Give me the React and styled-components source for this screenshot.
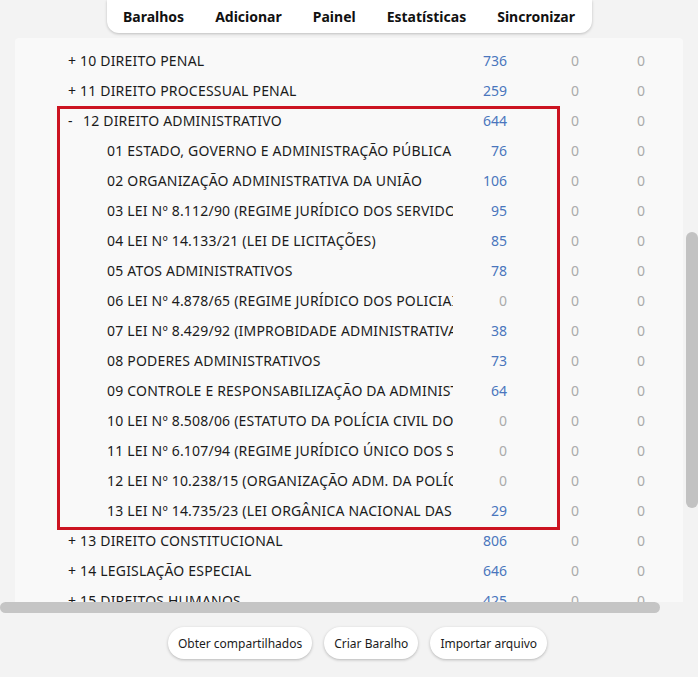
import React from 'react';
import styled, { createGlobalStyle } from 'styled-components';

// -- CONSTANTS
const navItems = ['Baralhos', 'Adicionar', 'Painel', 'Estatísticas', 'Sincronizar'];

const topDecks = [
  { name: '10 DIREITO PENAL', count: 736 },
  { name: '11 DIREITO PROCESSUAL PENAL', count: 259 },
];

const openDeck = { name: '12 DIREITO ADMINISTRATIVO', count: 644 };

// names are cut where the deck column ends
const subDecks = [
  { name: '01 ESTADO, GOVERNO E ADMINISTRAÇÃO PÚBLICA', count: 76 },
  { name: '02 ORGANIZAÇÃO ADMINISTRATIVA DA UNIÃO', count: 106 },
  { name: '03 LEI Nº 8.112/90 (REGIME JURÍDICO DOS SERVIDO', count: 95 },
  { name: '04 LEI Nº 14.133/21 (LEI DE LICITAÇÕES)', count: 85 },
  { name: '05 ATOS ADMINISTRATIVOS', count: 78 },
  { name: '06 LEI Nº 4.878/65 (REGIME JURÍDICO DOS POLICIAI', count: 0 },
  { name: '07 LEI Nº 8.429/92 (IMPROBIDADE ADMINISTRATIVA', count: 38 },
  { name: '08 PODERES ADMINISTRATIVOS', count: 73 },
  { name: '09 CONTROLE E RESPONSABILIZAÇÃO DA ADMINIST', count: 64 },
  { name: '10 LEI Nº 8.508/06 (ESTATUTO DA POLÍCIA CIVIL DO', count: 0 },
  { name: '11 LEI Nº 6.107/94 (REGIME JURÍDICO ÚNICO DOS S', count: 0 },
  { name: '12 LEI Nº 10.238/15 (ORGANIZAÇÃO ADM. DA POLÍC', count: 0 },
  { name: '13 LEI Nº 14.735/23 (LEI ORGÂNICA NACIONAL DAS', count: 29 },
];

const bottomDecks = [
  { name: '13 DIREITO CONSTITUCIONAL', count: 806 },
  { name: '14 LEGISLAÇÃO ESPECIAL', count: 646 },
  { name: '15 DIREITOS HUMANOS', count: 425 },
];

const actions = ['Obter compartilhados', 'Criar Baralho', 'Importar arquivo'];

// -- COMPONENTS
const GlobalStyle = createGlobalStyle`
  html, body {
    margin: 0;
    background: #f3f3f3;
    font-family: "Segoe UI", "Noto Sans", "Open Sans", sans-serif;
    color: #1b1b1b;
  }
`;

const Page = styled.div`
  height: 677px;
  display: flex;
  flex-direction: column;
  overflow: hidden;
`;

const TopBar = styled.nav`
  align-self: center;
  width: 485px;
  height: 33px;
  box-sizing: border-box;
  display: flex;
  justify-content: center;
  align-items: center;
  gap: 31px;
  background: #fff;
  border-radius: 0 0 12px 12px;
  box-shadow: 0 1px 3px rgba(0, 0, 0, 0.22);
`;

const NavLink = styled.span`
  font-size: 14px;
  font-weight: 700;
  color: #111;
`;

const Main = styled.div`
  display: flex;
  height: 580px;
`;

const ScrollArea = styled.div`
  width: 686px;
  display: flex;
  flex-direction: column;
`;

const Panel = styled.div`
  margin: 5px 0 0 15px;
  width: 668px;
  height: 564px;
  box-sizing: border-box;
  padding-top: 7px;
  background: #f9f9f9;
  border-radius: 4px 4px 0 0;
  overflow: hidden;
`;

const HThumb = styled.div`
  width: 660px;
  height: 11px;
  border-radius: 6px;
  background: #c5c5c5;
`;

const VTrack = styled.div`
  width: 12px;
`;

const VThumb = styled.div`
  margin-top: 199px;
  height: 276px;
  border-radius: 6px;
  background: #c2c2c2;
`;

const Row = styled.div`
  display: grid;
  grid-template-columns: ${({ $child }) => ($child ? '39px 346px' : '0 385px')} 54px 72px 66px;
  height: 30px;
  align-items: center;
  padding-left: 53px;
  font-size: 14px;
  letter-spacing: 0.2px;
  white-space: nowrap;
`;

const Name = styled.span`
  grid-column: 2;
  overflow: hidden;
`;

const Toggle = styled.span`
  display: inline-block;
  width: ${({ $open }) => ($open ? '15px' : '12px')};
`;

const Num = styled.span`
  text-align: right;
  letter-spacing: 0;
  color: ${({ $muted }) => ($muted ? '#ababab' : '#4a76bd')};
`;

const Group = styled.div`
  position: relative;

  /* highlight frame drawn over the open deck */
  &::after {
    content: '';
    position: absolute;
    top: 1px;
    left: 42px;
    width: 497px;
    height: 418px;
    border: 3px solid #cc1421;
    pointer-events: none;
  }
`;

const Actions = styled.div`
  display: flex;
  justify-content: center;
  gap: 12px;
  padding: 14px 0 0 17px;
`;

const ActionButton = styled.button`
  height: 32px;
  padding: 0 10px;
  border: none;
  border-radius: 16px;
  background: #fff;
  box-shadow: 0 1px 3px rgba(0, 0, 0, 0.25);
  font-family: inherit;
  font-size: 12px;
  color: #1b1b1b;
`;

const DeckRow = ({ name, count, child, open }) => (
  <Row $child={child}>
    <Name>
      {!child && <Toggle $open={open}>{open ? '-' : '+'}</Toggle>}
      {name}
    </Name>
    <Num $muted={count === 0}>{count}</Num>
    <Num $muted>0</Num>
    <Num $muted>0</Num>
  </Row>
);

// -- MAIN
export default function App() {
  return (
    <Page>
      <GlobalStyle />
      <TopBar>
        {navItems.map((item) => <NavLink key={item}>{item}</NavLink>)}
      </TopBar>
      <Main>
        <ScrollArea>
          <Panel>
            {topDecks.map((d) => <DeckRow key={d.name} {...d} />)}
            <Group>
              <DeckRow {...openDeck} open />
              {subDecks.map((d) => <DeckRow key={d.name} {...d} child />)}
            </Group>
            {bottomDecks.map((d) => <DeckRow key={d.name} {...d} />)}
          </Panel>
          <HThumb />
        </ScrollArea>
        <VTrack>
          <VThumb />
        </VTrack>
      </Main>
      <Actions>
        {actions.map((a) => <ActionButton key={a}>{a}</ActionButton>)}
      </Actions>
    </Page>
  );
}
